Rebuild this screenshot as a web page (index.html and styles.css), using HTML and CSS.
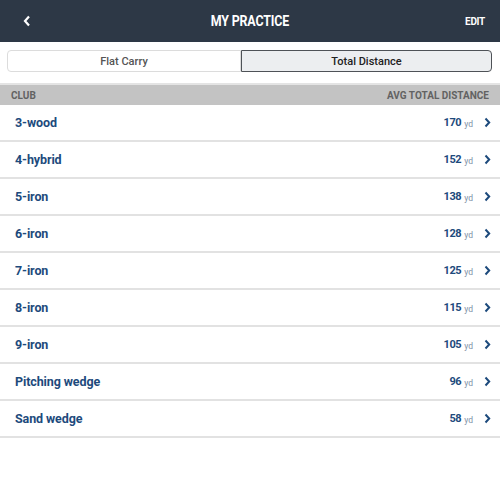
FILE: index.html
```html
<!DOCTYPE html>
<html lang="en">
<head>
    <meta charset="UTF-8">
    <meta name="viewport" content="width=device-width, initial-scale=1.0">
    <title>My Practice</title>
    <link rel="stylesheet" href="styles.css">
</head>
<body>
    <header class="top-bar">
        <button class="back">
            <svg width="8" height="12" viewBox="0 0 8 12"><path d="M6 1.5 L2 6 L6 10.5" fill="none" stroke="#fff" stroke-width="2.2"/></svg>
        </button>
        <h1>MY PRACTICE</h1>
        <button class="edit">EDIT</button>
    </header>

    <div class="segment">
        <button class="seg-btn">Flat Carry</button>
        <button class="seg-btn active">Total Distance</button>
    </div>

    <div class="list-head">
        <span>CLUB</span>
        <span>AVG TOTAL DISTANCE</span>
    </div>

    <ul class="club-list" id="club-list"></ul>

    <script>
        // Palos y distancia media total
        const clubs = [
            ['3-wood', 170],
            ['4-hybrid', 152],
            ['5-iron', 138],
            ['6-iron', 128],
            ['7-iron', 125],
            ['8-iron', 115],
            ['9-iron', 105],
            ['Pitching wedge', 96],
            ['Sand wedge', 58]
        ];

        let list = document.getElementById('club-list');
        clubs.forEach(([name, dist]) => {
            let li = document.createElement('li');
            li.className = 'club-row';
            li.innerHTML = `
                <span class="club-name">${name}</span>
                <span class="club-dist"><b>${dist}</b><small>yd</small>
                    <svg width="7" height="11" viewBox="0 0 7 11"><path d="M1.5 1.5 L5.2 5.5 L1.5 9.5" fill="none" stroke="#1d4a7c" stroke-width="2"/></svg>
                </span>`;
            list.appendChild(li);
        });
    </script>
</body>
</html>
```

FILE: styles.css
```css
body {
    margin: 0;
    font-family: Roboto, "Liberation Sans", sans-serif;
    background: #fff;
    color: #1d4a7c;
}

button {
    font-family: inherit;
    cursor: pointer;
}

.top-bar {
    height: 42px;
    background: #2d3846;
    display: flex;
    align-items: center;
    justify-content: space-between;
    padding: 0 15px;
}

.top-bar h1 {
    margin: 0;
    color: #fff;
    font-size: 15.5px;
    font-weight: 700;
    letter-spacing: -0.2px;
    transform: scaleX(0.8);
}

.top-bar button {
    background: none;
    border: none;
    color: #fff;
    padding: 0;
}

.back {
    display: flex;
    width: 34px;
    padding-left: 8px !important;
}

.edit {
    width: 34px;
    text-align: right;
    font-size: 10px;
    font-weight: 700;
    letter-spacing: -0.3px;
}

.segment {
    display: flex;
    margin: 8px 8px 0 7px;
    height: 22px;
}

.seg-btn {
    flex: 234;
    border: 1px solid #dcdcdc;
    background: #fff;
    color: #555;
    font-size: 11px;
    font-weight: 500;
    border-radius: 4px 0 0 4px;
    padding: 0;
}

.seg-btn.active {
    flex: 251;
    background: #eceef0;
    border-color: #4e5257;
    color: #222;
    border-radius: 0 4px 4px 0;
}

.list-head {
    margin-top: 11px;
    height: 20px;
    border-top: 2px solid #e4e4e4;
    background: #c3c3c3;
    color: #626262;
    font-size: 10px;
    font-weight: 700;
    display: flex;
    align-items: center;
    justify-content: space-between;
    padding: 0 11px;
}

.club-list {
    list-style: none;
    margin: 0;
    padding: 0;
}

.club-row {
    height: 35px;
    border-bottom: 2px solid #e2e2e2;
    display: flex;
    align-items: center;
    justify-content: space-between;
    padding: 0 9px 0 15px;
}

.club-name {
    font-size: 12.5px;
    font-weight: 700;
    letter-spacing: -0.1px;
}

.club-dist {
    display: flex;
    align-items: center;
}

.club-dist b {
    font-size: 11px;
    letter-spacing: -0.4px;
}

.club-dist small {
    font-size: 8.5px;
    color: #7d8fa6;
    margin: 2px 11px 0 3px;
}
```
